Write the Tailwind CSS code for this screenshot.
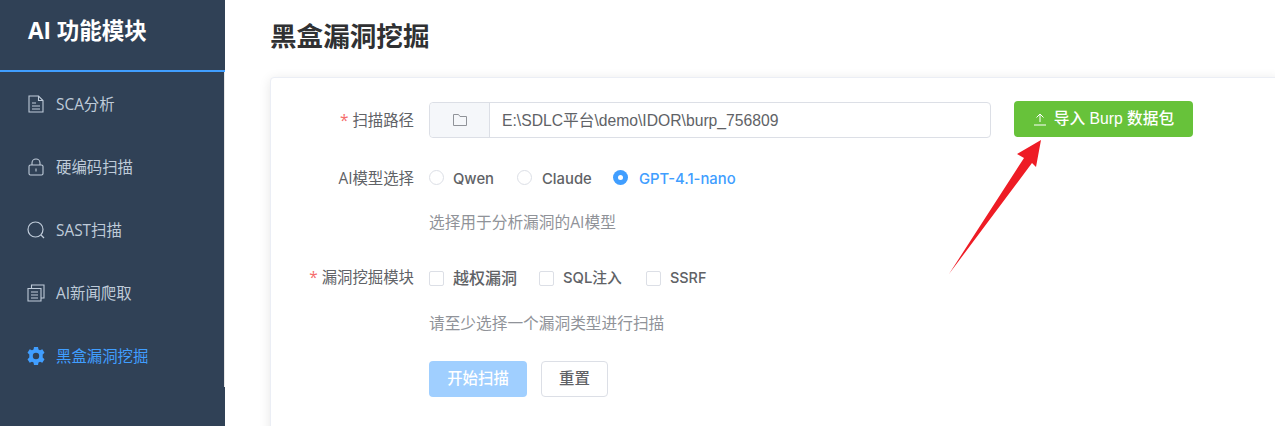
<!DOCTYPE html>
<html lang="zh"><head><meta charset="utf-8">
<script src="https://cdn.jsdelivr.net/npm/@tailwindcss/browser@4"></script>
</head>
<body class="m-0 bg-white overflow-hidden font-['Open_Sans','Noto_Sans_CJK_SC',sans-serif]">
<div class="flex h-[426px] w-[1275px] overflow-hidden relative">
  <aside class="w-[225px] shrink-0 bg-[#304156] flex flex-col">
    <div class="h-[72px] border-b-2 border-[#409eff] pl-[28px] pt-[15px] text-[22.5px] leading-[32px] font-bold text-white">AI 功能模块</div>
    <nav class="h-[315px] border-r border-[#e6e6e6] flex flex-col text-[15.4px] text-[#bfcbd9]">
      <a class="h-[63px] flex items-center pl-[28px] gap-[12px]">
        <svg class="w-[16px] h-[18px]" viewBox="0 0 16 18" fill="none" stroke="currentColor" stroke-width="1.1"><path d="M1 1h9.500L15 5.500V17H1z"/><path d="M10.500 1v4.500H15M4 8h4M4 11h8M4 14h8"/></svg>
        <span class="mt-[2px]">SCA分析</span></a>
      <a class="h-[63px] flex items-center pl-[28px] gap-[12px]">
        <svg class="w-[16px] h-[18px]" viewBox="0 0 16 18" fill="none" stroke="currentColor" stroke-width="1.1"><rect x="1" y="7" width="14" height="10" rx="1.500"/><path d="M4 7V5a4 4 0 0 1 8 0v2M8 10.500v3"/></svg>
        <span class="mt-[2px]">硬编码扫描</span></a>
      <a class="h-[63px] flex items-center pl-[27px] gap-[11px]">
        <svg class="w-[18px] h-[18px]" viewBox="0 0 18 18" fill="none" stroke="currentColor" stroke-width="1.2"><circle cx="8.500" cy="8.500" r="7.500"/><path d="M14 14l3 3"/></svg>
        <span class="mt-[2px]">SAST扫描</span></a>
      <a class="h-[63px] flex items-center pl-[27px] gap-[11px]">
        <svg class="w-[18px] h-[18px]" viewBox="0 0 18 18" fill="none" stroke="currentColor" stroke-width="1.1"><path d="M1 4.500h13V17H1zM4.500 4V1H17v13h-3M4 8h7M4 11h7M4 14h7"/></svg>
        <span class="mt-[2px]">AI新闻爬取</span></a>
      <a class="h-[63px] flex items-center pl-[27px] gap-[11px] text-[#409eff]">
        <svg class="w-[18px] h-[18px]" viewBox="0 0 18 18" fill="currentColor"><path fill-rule="evenodd" d="M7 0h4l.5 2.400 1.500.8L15.300 2.300 17.500 5.700 15.700 7.400v3.200l1.800 1.700-2.200 3.400-2.300-.9-1.500.8L11 18H7l-.5-2.400-1.500-.8-2.300.9L.5 12.300l1.800-1.700V7.400L.5 5.700 2.700 2.300 5 3.200l1.500-.8zM9 5.800a3.200 3.200 0 1 0 0 6.400 3.200 3.200 0 0 0 0-6.400z"/></svg>
        <span class="mt-[2px]">黑盒漏洞挖掘</span></a>
    </nav>
  </aside>
  <main class="flex-1 pl-[45px]">
    <h1 class="text-[26.6px] leading-[32px] font-bold text-[#303133] pt-[20px] m-0">黑盒漏洞挖掘</h1>
    <section class="mt-[25px] w-[1010px] h-[400px] bg-white border border-[#ebeef5] rounded-[4px] shadow-[0_2px_12px_0_rgba(0,0,0,0.1)] flex flex-col text-[15.4px] text-[#606266]">
      <div class="flex items-center h-[36px] mt-[24px]">
        <label class="w-[143px] text-right shrink-0 mt-[2px]"><span class="text-[#f56c6c] mr-[4px]">*</span>扫描路径</label>
        <div class="ml-[15px] w-[562px] h-[36px] flex border border-[#dcdfe6] rounded-[4px]">
          <div class="w-[60px] bg-[#f5f7fa] border-r border-[#dcdfe6] rounded-l-[4px] flex items-center justify-center text-[#909399]">
            <svg class="w-[14px] h-[12px]" viewBox="0 0 14 12" fill="none" stroke="currentColor"><path d="M.5 11.500V.5h5l1.500 2h6.500v9z"/></svg>
          </div>
          <div class="px-[12px] pt-[2px] flex items-center text-[15.7px] font-['Liberation_Sans','Noto_Sans_CJK_SC',sans-serif]">E:\SDLC平台\demo\IDOR\burp_756809</div>
        </div>
        <button class="ml-[23px] mt-[-2px] w-[179px] h-[36px] bg-[#67c23a] rounded-[4px] text-white text-[15.7px] font-medium flex items-center justify-center gap-[7px] font-['Liberation_Sans','Noto_Sans_CJK_SC',sans-serif]">
          <svg class="w-[14px] h-[14px]" viewBox="0 0 14 14" fill="none" stroke="currentColor"><path d="M1 13h12M7 10V2M3.500 5.500L7 2l3.500 3.500"/></svg>
          <span>导入 Burp 数据包</span></button>
      </div>
      <div class="flex items-center h-[36px] mt-[21px]">
        <label class="w-[143px] text-right shrink-0 mt-[4px]">AI模型选择</label>
        <div class="ml-[15px] flex items-center font-medium text-[14.8px] whitespace-nowrap font-['Inter','Noto_Sans_CJK_SC',sans-serif]">
          <span class="w-[15px] h-[15px] rounded-full border border-[#dcdfe6]"></span><span class="ml-[9px] w-[42px] mt-[4px]">Qwen</span>
          <span class="ml-[22px] w-[15px] h-[15px] rounded-full border border-[#dcdfe6]"></span><span class="ml-[10px] w-[49px] mt-[4px]">Claude</span>
          <span class="ml-[22px] w-[15px] h-[15px] rounded-full bg-[#409eff] flex items-center justify-center"><span class="w-[5px] h-[5px] rounded-full bg-white"></span></span><span class="ml-[11px] text-[#409eff] mt-[4px]">GPT-4.1-nano</span>
        </div>
      </div>
      <p class="ml-[158px] mt-[16px] leading-[22px] text-[15.7px] text-[#909399] m-0">选择用于分析漏洞的AI模型</p>
      <div class="flex items-center h-[36px] mt-[27px]">
        <label class="w-[143px] text-right shrink-0"><span class="text-[#f56c6c] mr-[4px]">*</span>漏洞挖掘模块</label>
        <div class="ml-[15px] flex items-center font-medium text-[14.8px] whitespace-nowrap font-['Inter','Noto_Sans_CJK_SC',sans-serif]">
          <span class="w-[15px] h-[15px] rounded-[2px] border border-[#dcdfe6]"></span><span class="ml-[9px] w-[64px] text-[16px]">越权漏洞</span>
          <span class="ml-[22px] w-[15px] h-[15px] rounded-[2px] border border-[#dcdfe6]"></span><span class="ml-[9px] w-[61px]">SQL注入</span>
          <span class="ml-[22px] w-[15px] h-[15px] rounded-[2px] border border-[#dcdfe6]"></span><span class="ml-[9px] text-[14.4px]">SSRF</span>
        </div>
      </div>
      <p class="ml-[158px] mt-[16px] leading-[22px] text-[15.7px] text-[#909399] m-0">请至少选择一个漏洞类型进行扫描</p>
      <div class="ml-[158px] mt-[27px] flex gap-[14px]">
        <button class="w-[98px] h-[36px] rounded-[4px] bg-[#a0cfff] text-white font-medium">开始扫描</button>
        <button class="w-[67px] h-[36px] rounded-[4px] border border-[#dcdfe6] font-medium">重置</button>
      </div>
    </section>
  </main>
  <svg class="absolute left-[940px] top-[130px]" width="110" height="150" viewBox="0 0 110 150"><path d="M101 10 L77 24 L84 28 L9 144 L92 33 L96 37 Z" fill="#ee1c25"/></svg>
</div>
</body></html>
